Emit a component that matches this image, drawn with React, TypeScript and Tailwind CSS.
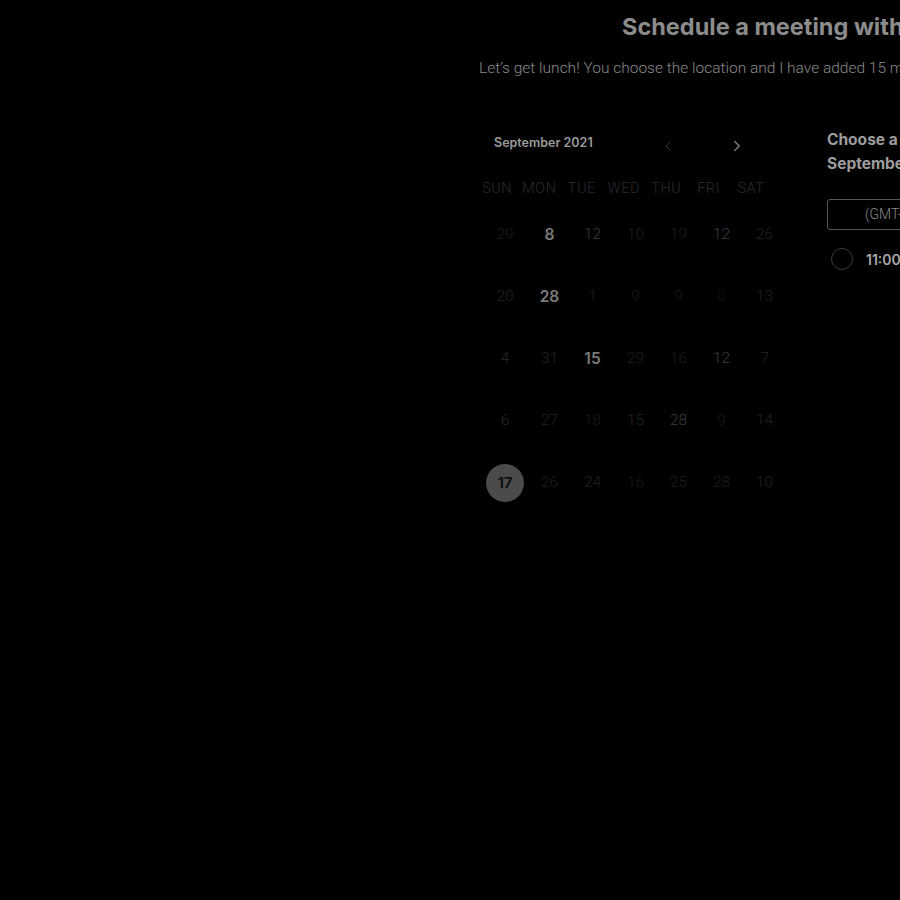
import { ChevronLeft, ChevronRight } from "lucide-react";

type Day = { n: string; c: string; bold?: boolean; selected?: boolean };

const weekdays = ["SUN", "MON", "TUE", "WED", "THU", "FRI", "SAT"];

const rows: Day[][] = [
  [
    { n: "29", c: "text-[#1a1a1a]" },
    { n: "8", c: "text-[#7a7a7a]", bold: true },
    { n: "12", c: "text-[#3c3c3c]" },
    { n: "10", c: "text-[#1e1e1e]" },
    { n: "19", c: "text-[#1c1c1c]" },
    { n: "12", c: "text-[#3c3c3c]" },
    { n: "26", c: "text-[#232323]" },
  ],
  [
    { n: "20", c: "text-[#222]" },
    { n: "28", c: "text-[#7a7a7a]", bold: true },
    { n: "1", c: "text-[#1e1e1e]" },
    { n: "9", c: "text-[#1a1a1a]" },
    { n: "9", c: "text-[#1a1a1a]" },
    { n: "0", c: "text-[#121212]" },
    { n: "13", c: "text-[#222]" },
  ],
  [
    { n: "4", c: "text-[#2a2a2a]" },
    { n: "31", c: "text-[#222]" },
    { n: "15", c: "text-[#7a7a7a]", bold: true },
    { n: "29", c: "text-[#1e1e1e]" },
    { n: "16", c: "text-[#1e1e1e]" },
    { n: "12", c: "text-[#3c3c3c]" },
    { n: "7", c: "text-[#222]" },
  ],
  [
    { n: "6", c: "text-[#2a2a2a]" },
    { n: "27", c: "text-[#222]" },
    { n: "18", c: "text-[#1a1a1a]" },
    { n: "15", c: "text-[#242424]" },
    { n: "28", c: "text-[#3c3c3c]" },
    { n: "9", c: "text-[#1a1a1a]" },
    { n: "14", c: "text-[#222]" },
  ],
  [
    { n: "17", c: "text-[#111]", bold: true, selected: true },
    { n: "26", c: "text-[#1e1e1e]" },
    { n: "24", c: "text-[#242424]" },
    { n: "16", c: "text-[#1a1a1a]" },
    { n: "25", c: "text-[#1e1e1e]" },
    { n: "28", c: "text-[#1e1e1e]" },
    { n: "10", c: "text-[#222]" },
  ],
];

const inter = "font-['Inter',sans-serif]";
const roboto = "font-['Roboto',sans-serif]";

function Calendar() {
  return (
    <div className="ml-[3px] mt-[2px] w-[304px] shrink-0">
      <div className="mt-[2px] flex h-[20px] items-center">
        <span className={`${inter} ml-[12px] text-[12.5px] font-semibold text-[#9a9a9a]`}>
          September 2021
        </span>
        <ChevronLeft size={16} strokeWidth={1.5} className="ml-[67px] mt-[6px] text-[#333]" />
        <ChevronRight size={18} strokeWidth={2} className="ml-[52px] mt-[6px] text-[#7a7a7a]" />
      </div>
      <div
        className={`${roboto} ml-[-6px] mt-[25px] grid w-[296px] grid-cols-7 text-[14.5px] font-light text-[#2c2c2c]`}
      >
        {weekdays.map((w) => (
          <span key={w} className="text-center tracking-[0.5px]">
            {w}
          </span>
        ))}
      </div>
      <div className="mt-[4px] flex flex-col">
        {rows.map((row, i) => (
          <div key={i} className="grid h-[62px] grid-cols-[46px_43px_43px_43px_43px_43px_43px] items-center">
            {row.map((d, j) => (
              <div key={j} className="flex items-center justify-center">
                {d.selected ? (
                  <span
                    className={`${inter} flex h-[38px] w-[38px] items-center justify-center rounded-full bg-[#4b4b4b] text-[15px] font-bold ${d.c}`}
                  >
                    {d.n}
                  </span>
                ) : (
                  <span
                    className={`${d.bold ? `${inter} font-semibold` : `${roboto} font-light`} text-[15.5px] ${d.c}`}
                  >
                    {d.n}
                  </span>
                )}
              </div>
            ))}
          </div>
        ))}
      </div>
    </div>
  );
}

function TimePanel() {
  return (
    <div className="ml-[3px] w-[300px] shrink-0">
      <div className={`${inter} mt-[-1px] text-[15.5px] font-bold leading-[24px] text-[#9c9c9c]`}>
        <div>Choose a time on</div>
        <div>September 17, 2021</div>
      </div>
      <div className="mt-[23px] flex h-[31px] w-[260px] items-center rounded-[3px] border border-[#555] pl-[37px]">
        <span className={`${roboto} text-[14px] font-light text-[#8a8a8a]`}>(GMT-07:00) Pacific Time</span>
      </div>
      <div className="mt-[18px] flex items-center">
        <span className="ml-[4px] h-[22px] w-[22px] rounded-full border-[1.5px] border-[#3c3c3c]" />
        <span className={`${inter} ml-[13px] text-[14px] font-semibold text-[#a8a8a8]`}>11:00 AM</span>
      </div>
    </div>
  );
}

export default function App() {
  return (
    <div className="h-[900px] w-[900px] overflow-hidden bg-black">
      <div className="w-[1400px] pl-[479px] pt-[12px]">
        <h1 className={`${inter} pl-[143px] text-[23.5px] font-bold leading-[30px] text-[#8c8c8c]`}>
          Schedule a meeting with Jordan
        </h1>
        <p className={`${roboto} mt-[16px] text-[15.5px] font-light leading-[20px] text-[#8a8a8a]`}>
          Let’s get lunch! You choose the location and I have added 15 minutes of travel time.
        </p>
        <div className="mt-[51px] flex items-start gap-[38px]">
          <Calendar />
          <TimePanel />
        </div>
      </div>
    </div>
  );
}
